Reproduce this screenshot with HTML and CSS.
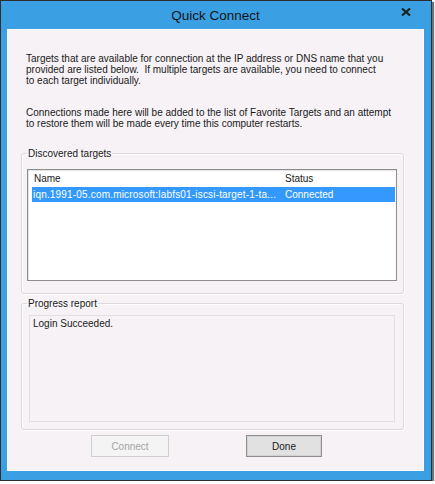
FILE: index.html
```html
<!DOCTYPE html>
<html>
<head>
<meta charset="utf-8">
<link rel="stylesheet" href="styles.css">
</head>
<body>
<div class="window">
  <div class="titlebar">
    <span></span>
    <span class="title">Quick Connect</span>
    <span class="close"><svg width="10" height="8" viewBox="0 0 10 8"><path d="M1 0.5 L9 7.5 M9 0.5 L1 7.5" stroke="#1e1e1e" stroke-width="2.1" fill="none"/></svg></span>
  </div>
  <div class="client">
    <p class="para p1">Targets that are available for connection at the IP address or DNS name that you<br>provided are listed below.&nbsp; If multiple targets are available, you need to connect<br>to each target individually.</p>
    <p class="para p2">Connections made here will be added to the list of Favorite Targets and an attempt<br>to restore them will be made every time this computer restarts.</p>
    <fieldset class="group group-targets">
      <legend>Discovered targets</legend>
      <div class="listview">
        <div class="lv-row lv-header"><span class="col-name">Name</span><span class="col-status">Status</span></div>
        <div class="lv-row lv-selected"><span class="col-name">iqn.1991-05.com.microsoft:labfs01-iscsi-target-1-ta...</span><span class="col-status">Connected</span></div>
      </div>
    </fieldset>
    <fieldset class="group group-progress">
      <legend>Progress report</legend>
      <div class="textbox">Login Succeeded.</div>
    </fieldset>
    <div class="buttons">
      <button class="btn btn-connect" disabled>Connect</button>
      <button class="btn btn-done">Done</button>
    </div>
  </div>
</div>
</body>
</html>
```
FILE: styles.css
```css
html, body {
  margin: 0;
  padding: 0;
  background: #ffffff;
}
body {
  font-family: "Liberation Sans", Arial, sans-serif;
  font-size: 10px;
  color: #1a1a1a;
}
.window {
  width: 432px;
  height: 481px;
  box-sizing: border-box;
  border: 1px solid #2e2e2e;
  background: #3aa0e3;
  padding: 0 7px 8px 6px;
  box-shadow: 2px 2px 1px rgba(0, 0, 0, 0.55);
}
.titlebar {
  height: 28px;
  display: grid;
  grid-template-columns: 1fr auto 1fr;
  align-items: start;
}
.title {
  font-size: 13.5px;
  line-height: 15px;
  padding-top: 7px;
  color: #141414;
}
.close {
  justify-self: end;
  margin-right: 13px;
  padding-top: 7px;
  line-height: 0;
}
.client {
  height: 442px;
  box-sizing: border-box;
  background: #f6f2f6;
  border: 1px solid #fdfcfd;
  padding: 23px 0 0 18px;
}
.para {
  margin: 0;
  line-height: 11px;
  white-space: nowrap;
}
.p2 {
  margin-top: 21px;
}
.group {
  margin: 0 0 0 -5px;
  width: 383px;
  box-sizing: border-box;
  border: 1px solid #dcd9dc;
  border-radius: 3px;
  box-shadow: inset 1px 1px 0 #ffffff, 1px 1px 0 #ffffff;
  min-inline-size: 0;
}
.group legend {
  padding: 0 1px;
  margin-left: 0;
  line-height: 11px;
}
.group-targets {
  margin-top: 19px;
  padding: 10px 5px 12px 5px;
}
.listview {
  width: 370px;
  height: 112px;
  box-sizing: border-box;
  background: #ffffff;
  border: 1px solid #8e8e8e;
  box-shadow: inset 1px 1px 0 #e4e4e4;
  padding: 1px 1px 0 4px;
}
.lv-row {
  display: flex;
  height: 15px;
  line-height: 15px;
  white-space: nowrap;
}
.lv-header {
  height: 16px;
  line-height: 16px;
  padding-left: 2px;
}
.lv-header .col-name {
  width: 251px;
}
.lv-selected {
  background: #3399ff;
  color: #ffffff;
  padding-left: 1px;
}
.col-name {
  width: 252px;
  overflow: hidden;
}
.lv-selected .col-name {
  letter-spacing: 0.18px;
}
.group-progress {
  margin-top: 4px;
  padding: 6px 7px 7px 7px;
}
.group-progress legend {
  margin-left: -2px;
}
.textbox {
  width: 366px;
  height: 107px;
  box-sizing: border-box;
  border: 1px solid #e2dfe2;
  padding: 0 3px;
  line-height: 15px;
}
.buttons {
  display: flex;
  margin-top: 5px;
  padding-left: 65px;
  gap: 77px;
}
.btn {
  height: 22px;
  box-sizing: border-box;
  font-family: "Liberation Sans", Arial, sans-serif;
  font-size: 10px;
  padding: 0;
  border-radius: 0;
}
.btn-connect {
  width: 78px;
  background: #f5f4f5;
  border: 1px solid #cfcfcf;
  color: #a3a3a3;
}
.btn-done {
  width: 76px;
  background: #e1e1e1;
  border: 1px solid #8d8d8d;
  box-shadow: inset 0 0 0 1px #d2d2d2;
  color: #1a1a1a;
}
```
